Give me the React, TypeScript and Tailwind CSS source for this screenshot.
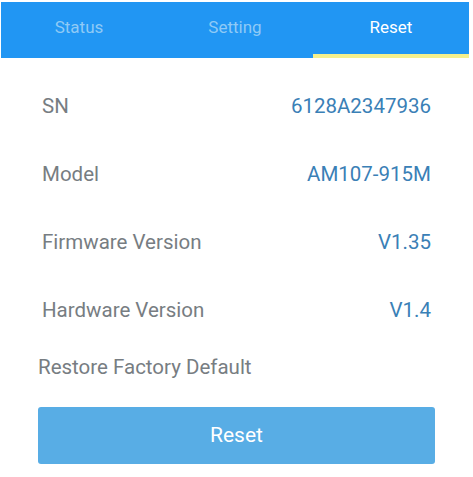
const rows = [
  { label: "SN", value: "6128A2347936" },
  { label: "Model", value: "AM107-915M" },
  { label: "Firmware Version", value: "V1.35" },
  { label: "Hardware Version", value: "V1.4" },
];

const tabs = ["Status", "Setting", "Reset"];

export default function App() {
  return (
    <div
      className="w-[473px] h-[477px] bg-white overflow-hidden"
      style={{ fontFamily: "Roboto, 'Noto Sans', sans-serif" }}
    >
      <div className="ml-[1px] mt-[2px] w-[468px] h-[56px] bg-[#2196f3] flex">
        {tabs.map((t) => (
          <div
            key={t}
            className={
              t === "Reset"
                ? "flex-1 flex items-center justify-center text-[17px] text-white border-b-4 border-[#f5f08c]"
                : "flex-1 flex items-center justify-center text-[17px] text-[#8fcaf6] border-b-4 border-transparent"
            }
          >
            {t}
          </div>
        ))}
      </div>

      <div className="pt-[14px]">
        {rows.map((r) => (
          <div
            key={r.label}
            className="h-[68px] flex items-center justify-between pl-[42px] pr-[42px] text-[20.5px]"
          >
            <span className="text-[#777d82]">{r.label}</span>
            <span className="text-[#3a80b6]">{r.value}</span>
          </div>
        ))}
      </div>

      <div className="mt-[11px] pl-[38px] h-[24px] leading-[24px] text-[20.5px] text-[#777d82]">
        Restore Factory Default
      </div>

      <div className="mt-[28px] mx-[38px] h-[57px] rounded-[3px] bg-[#58ade5] flex items-center justify-center text-[21px] text-white">
        Reset
      </div>
    </div>
  );
}
